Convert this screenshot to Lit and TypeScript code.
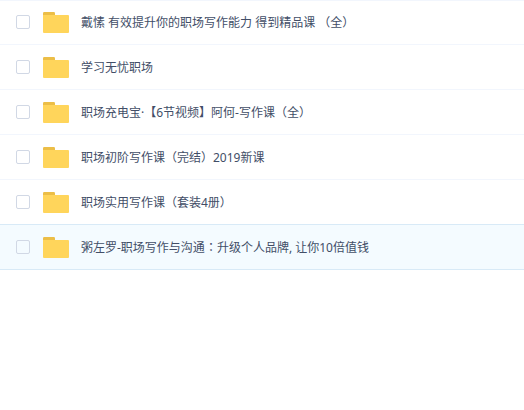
import { LitElement, html, css } from "lit";
import { customElement, property, state } from "lit/decorators.js";
import { classMap } from "lit/directives/class-map.js";

@customElement("folder-icon")
class FolderIcon extends LitElement {
  static styles = css`
    :host {
      display: block;
      flex: none;
      width: 26px;
      height: 21px;
    }
    svg {
      display: block;
    }
  `;

  render() {
    return html`
      <svg width="26" height="21" viewBox="0 0 26 21" aria-hidden="true">
        <path d="M0 4V1.2Q0 0 1.2 0H10.8Q12 0 12 1.2V4Z" fill="#ecbe47" />
        <path d="M0 3H25Q26 3 26 4V20Q26 21 25 21H1Q0 21 0 20Z" fill="#ffd55b" />
      </svg>
    `;
  }
}

@customElement("file-row")
class FileRow extends LitElement {
  @property() name = "";

  static styles = css`
    :host {
      display: flex;
      align-items: center;
      min-height: 44px;
      padding: 0 16px;
    }
    .check {
      appearance: none;
      box-sizing: border-box;
      flex: none;
      width: 14px;
      height: 14px;
      margin: 0 13px 0 0;
      border: 1px solid #d1d8e5;
      border-radius: 2px;
      background: transparent;
    }
    .check:checked {
      background: #3b8cff;
      border-color: #3b8cff;
    }
    .name {
      margin-left: 12px;
      padding-top: 2px;
      color: #424e67;
      text-decoration: none;
      line-height: 20px;
      text-spacing-trim: space-all;
    }
    /* The TC face sets the full-width colon in the middle of its box. */
    .colon {
      font-family: "Noto Sans CJK TC", sans-serif;
      line-height: 0;
    }
  `;

  render() {
    const parts = this.name.split("：");
    return html`
      <input class="check" type="checkbox" aria-labelledby="name" />
      <folder-icon></folder-icon>
      <a class="name" id="name" href="#"
        >${parts.map((part, i) =>
          i ? html`<span class="colon" lang="zh-TW">：</span>${part}` : part
        )}</a
      >
    `;
  }
}

@customElement("app-root")
class AppRoot extends LitElement {
  @state() private active = 5;

  private names = [
    "戴愫 有效提升你的职场写作能力 得到精品课 （全）",
    "学习无忧职场",
    "职场充电宝·【6节视频】阿何-写作课（全）",
    "职场初阶写作课（完结）2019新课",
    "职场实用写作课（套装4册）",
    "粥左罗-职场写作与沟通：升级个人品牌, 让你10倍值钱",
  ];

  static styles = css`
    :host {
      display: block;
      font: 12px/20px "Noto Sans", "Noto Sans CJK SC", sans-serif;
      background: #fff;
    }
    .list {
      margin: 0;
      padding: 0;
      list-style: none;
      box-shadow: inset 0 1px #f2f6fd;
    }
    .item {
      border-bottom: 1px solid #f2f6fd;
    }
    .item.before,
    .item.active {
      border-bottom-color: #d8eaf7;
    }
    .item.active {
      background: #f4fbff;
    }
  `;

  render() {
    return html`
      <ul class="list" lang="zh-CN">
        ${this.names.map(
          (name, i) => html`
            <li
              class=${classMap({
                item: true,
                active: i === this.active,
                before: i === this.active - 1,
              })}
            >
              <file-row .name=${name}></file-row>
            </li>
          `
        )}
      </ul>
    `;
  }
}
